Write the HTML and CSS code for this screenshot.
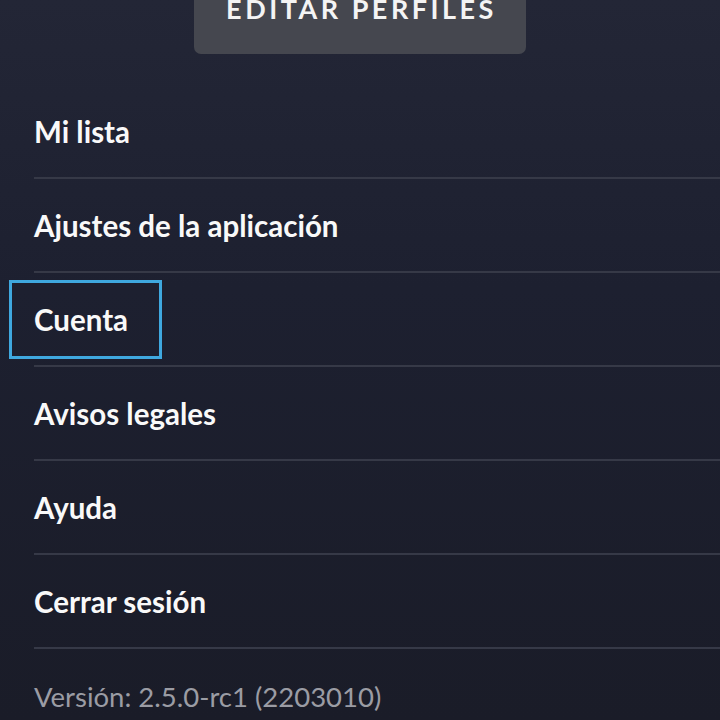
FILE: index.html
```html
<!DOCTYPE html>
<html lang="es">
<head>
<meta charset="utf-8">
<title>Más</title>
<link rel="stylesheet" href="styles.css">
</head>
<body>
<div class="page">
  <div class="header">
    <button class="edit-btn">EDITAR PERFILES</button>
  </div>
  <ul class="menu">
    <li class="item"><span class="label">Mi lista</span></li>
    <li class="item"><span class="label">Ajustes de la aplicación</span></li>
    <li class="item"><span class="label focused">Cuenta</span></li>
    <li class="item"><span class="label">Avisos legales</span></li>
    <li class="item"><span class="label">Ayuda</span></li>
    <li class="item"><span class="label">Cerrar sesión</span></li>
  </ul>
  <div class="version">Versión: 2.5.0-rc1 (2203010)</div>
</div>
</body>
</html>
```

FILE: styles.css
```css
html, body {
  margin: 0;
  padding: 0;
}
body {
  width: 720px;
  height: 720px;
  overflow: hidden;
  background: linear-gradient(180deg, #232636 0%, #1d2030 40%, #1a1c28 100%);
  font-family: "Lato", "Noto Sans", sans-serif;
  color: #f9f9f9;
}
.page {
  display: flex;
  flex-direction: column;
}
.header {
  display: flex;
  justify-content: center;
  margin-top: -37px;
}
.edit-btn {
  width: 332px;
  height: 91px;
  border: none;
  border-radius: 7px;
  background: #45474f;
  color: #f4f4f4;
  font-family: "Lato", sans-serif;
  font-weight: 700;
  font-size: 27px;
  letter-spacing: 3.5px;
  padding: 0 0 0 3px;
  display: flex;
  justify-content: center;
  align-items: center;
}
.menu {
  list-style: none;
  margin: 31px 0 0 34px;
  padding: 0;
}
.item {
  height: 92px;
  border-bottom: 2px solid #363947;
  display: flex;
  align-items: center;
}
.label {
  position: relative;
  font-weight: 700;
  font-size: 29.5px;
  color: #f9f9f9;
}
.focused::after {
  content: "";
  position: absolute;
  left: -25px;
  right: -34px;
  top: -22px;
  bottom: -22px;
  border: 3px solid #3fa8df;
}
.version {
  margin-left: 34px;
  height: 94px;
  display: flex;
  align-items: center;
  font-size: 27.5px;
  color: #9b9ca4;
}
```
